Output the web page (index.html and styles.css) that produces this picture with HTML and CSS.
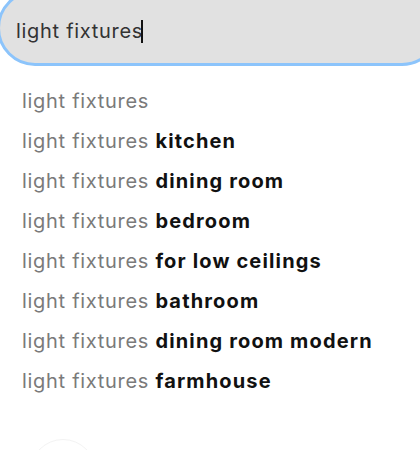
FILE: index.html
```html
<!DOCTYPE html>
<html>
<head>
<meta charset="utf-8">
<link rel="stylesheet" href="styles.css">
</head>
<body>
<div class="page">
  <div class="search">
    <span class="query">light fixtures</span><span class="caret"></span>
  </div>
  <ul class="suggestions">
    <li>light fixtures</li>
    <li>light fixtures <b>kitchen</b></li>
    <li>light fixtures <b>dining room</b></li>
    <li>light fixtures <b>bedroom</b></li>
    <li>light fixtures <b>for low ceilings</b></li>
    <li>light fixtures <b>bathroom</b></li>
    <li>light fixtures <b>dining room modern</b></li>
    <li>light fixtures <b>farmhouse</b></li>
  </ul>
  <div class="ghost"></div>
</div>
</body>
</html>
```
FILE: styles.css
```css
html, body {
  margin: 0;
  padding: 0;
  background: #ffffff;
  overflow: hidden;
}
.page {
  width: 420px;
  height: 450px;
  overflow: hidden;
  font-family: Inter, "Noto Sans", sans-serif;
}
.search {
  margin: -10px -20px 0 -3px;
  height: 76px;
  box-sizing: border-box;
  background: #e1e1e1;
  border: 3px solid #8cc4fb;
  border-radius: 40px;
  display: flex;
  align-items: center;
  padding: 6px 0 0 16px;
}
.query {
  font-size: 20px;
  letter-spacing: 0.7px;
  color: #333333;
}
.caret {
  display: inline-block;
  width: 2px;
  height: 23px;
  background: #111;
  margin-left: -2px;
}
.suggestions {
  list-style: none;
  margin: 15px 0 0 0;
  padding: 0 0 0 22px;
}
.suggestions li {
  height: 40px;
  line-height: 40px;
  font-size: 20px;
  letter-spacing: 0.7px;
  color: #7a7a7a;
  white-space: nowrap;
}
.suggestions b {
  font-weight: 700;
  letter-spacing: 1.15px;
  color: #111111;
}
.ghost {
  margin: 38px 0 0 30px;
  width: 64px;
  height: 64px;
  border-radius: 50%;
  border: 1px solid #f3f3f3;
}
```
